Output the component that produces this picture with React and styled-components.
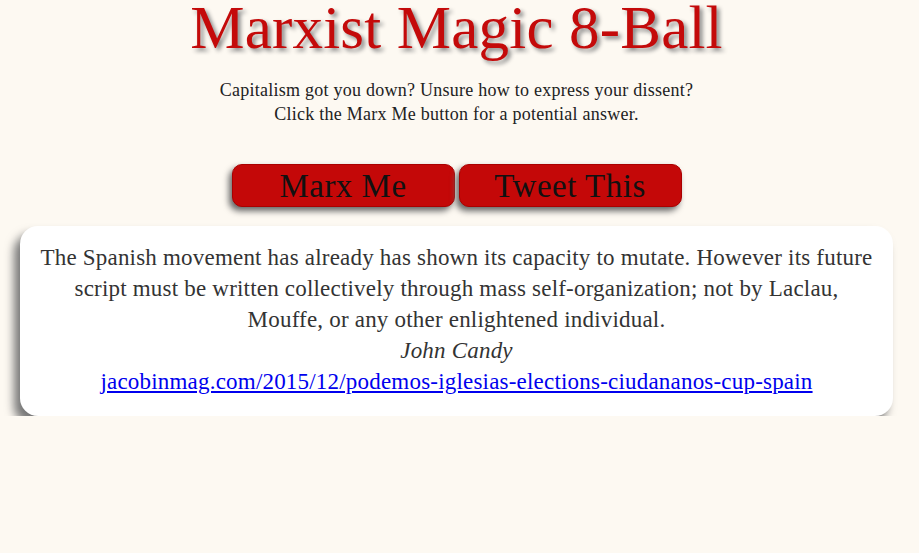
import React from 'react';
import styled, { createGlobalStyle } from 'styled-components';

const GlobalStyle = createGlobalStyle`
  body {
    margin: 0;
    background-color: #fdf9f2;
    font-family: 'Liberation Serif', 'Times New Roman', serif;
    color: #333;
  }
`;

const Page = styled.div`
  display: flex;
  flex-direction: column;
  align-items: center;
  padding: 0 26px 0 20px;
`;

const Title = styled.h1`
  margin: 0;
  font-size: 61px;
  font-weight: normal;
  line-height: 56px;
  letter-spacing: 0.2px;
  color: #c40a0a;
  text-shadow: 3px 3px 4px #888;
`;

const Blurb = styled.p`
  margin: 22px 0 0;
  font-size: 18px;
  line-height: 24px;
  letter-spacing: 0.25px;
  text-align: center;
  color: #222;
`;

const Buttons = styled.div`
  display: flex;
  gap: 4px;
  margin-top: 38px;
`;

const Button = styled.button`
  width: 223px;
  height: 43px;
  padding: 0;
  border: 1px solid #a00;
  border-radius: 10px;
  background-color: #c40808;
  color: #111;
  font-family: inherit;
  font-size: 33px;
  line-height: 40px;
  letter-spacing: 0.5px;
  box-shadow: -3px 4px 6px #666;
  cursor: pointer;
`;

const Card = styled.div`
  align-self: stretch;
  margin-top: 19px;
  padding: 16px 20px 19px;
  border-radius: 18px;
  background-color: #fff;
  box-shadow: -6px 8px 10px #777;
  text-align: center;
  font-size: 23px;
  line-height: 31px;
  letter-spacing: 0.2px;
`;

const Author = styled.div`
  font-style: italic;
`;

const Source = styled.a`
  color: #00e;
  text-decoration: underline;
`;

const quote = {
  text: 'The Spanish movement has already has shown its capacity to mutate. However its future script must be written collectively through mass self-organization; not by Laclau, Mouffe, or any other enlightened individual.',
  author: 'John Candy',
  link: 'jacobinmag.com/2015/12/podemos-iglesias-elections-ciudananos-cup-spain',
};

const App = () => (
  <>
    <GlobalStyle />
    <Page>
      <Title>Marxist Magic 8-Ball</Title>
      <Blurb>
        Capitalism got you down? Unsure how to express your dissent?
        <br />
        Click the Marx Me button for a potential answer.
      </Blurb>
      <Buttons>
        <Button>Marx Me</Button>
        <Button>Tweet This</Button>
      </Buttons>
      <Card>
        <div>{quote.text}</div>
        <Author>{quote.author}</Author>
        <Source href={`http://${quote.link}`}>{quote.link}</Source>
      </Card>
    </Page>
  </>
);

export default App;
